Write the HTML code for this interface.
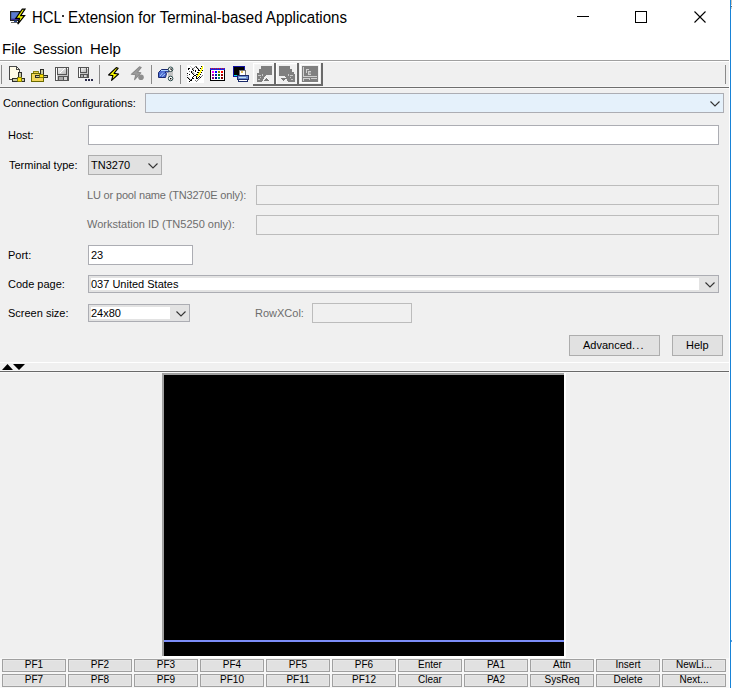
<!DOCTYPE html>
<html><head><meta charset="utf-8">
<style>
*{margin:0;padding:0;box-sizing:border-box}
html,body{width:732px;height:688px;overflow:hidden;background:#f0f0f0;font-family:"Liberation Sans",sans-serif;color:#000}
.a{position:absolute}
.t{position:absolute;white-space:nowrap;line-height:1;font-size:11px}
.gray{color:#6d6d6d}
.fld{position:absolute;background:#fff;border:1px solid #acadb3}
.dis{position:absolute;background:#f0f0f0;border:1px solid #bcbcbc}
.btn{position:absolute;background:#e1e1e1;border:1px solid #adadad}
.kb{position:absolute;background:#e1e1e1;border:1px solid #a0a0a0;box-shadow:inset 0 0 0 1px #e6e6e6;width:64px;height:13px;font-size:10px;line-height:10px;padding-top:0px;text-align:center;color:#000}
</style></head><body>
<!-- title + menu (white) -->
<div class="a" style="left:0;top:0;width:729px;height:60px;background:#fff"></div>
<div class="a" style="left:729px;top:0;width:1px;height:688px;background:#fff"></div>
<div class="a" style="left:730px;top:0;width:1px;height:688px;background:#1883d7"></div>
<div class="a" style="left:731px;top:0;width:1px;height:688px;background:#fff"></div>
<div class="a" style="left:731px;top:0;width:1px;height:5px;background:#d2c6b6"></div>
<div class="a" style="left:731px;top:6px;width:1px;height:1px;background:#6e6e6e"></div>
<div class="a" style="left:731px;top:7px;width:1px;height:2px;background:#ddd3c6"></div>
<div class="a" style="left:731px;top:640px;width:1px;height:2px;background:#5aa0e0"></div>

<!-- title icon -->
<svg class="a" style="left:8px;top:6px" width="20" height="20" viewBox="0 0 20 20">
  <rect x="2.6" y="5.6" width="9" height="8.8" fill="#5a7ad0" stroke="#222" stroke-width="1.2"/>
  <rect x="3.2" y="12.6" width="8" height="1.4" fill="#3a2a90"/>
  <rect x="6" y="14.6" width="3" height="1.6" fill="#2a4a8a"/>
  <rect x="3" y="16" width="7" height="0.9" fill="#555"/>
  <path d="M14.3 3.2 L17 3.2 L12.6 9.7 L16.6 9.7 L9.8 18.2 L11.6 12.3 L7.8 12.3 Z" fill="#ffff00" stroke="#000" stroke-width="1.2" stroke-linejoin="miter"/>
</svg>
<div class="t" style="left:32px;top:10px;font-size:16px;transform:scaleX(0.93);transform-origin:0 0">HCL</div>
<div class="a" style="left:62px;top:15px;width:2px;height:2px;background:#333"></div>
<div class="t" style="left:68px;top:10px;font-size:16px;transform:scaleX(0.94);transform-origin:0 0">Extension for Terminal-based Applications</div>

<!-- window buttons -->
<div class="a" style="left:577px;top:16px;width:12px;height:1px;background:#000"></div>
<div class="a" style="left:635px;top:11px;width:12px;height:12px;border:1px solid #000"></div>
<svg class="a" style="left:694px;top:11px" width="12" height="12" viewBox="0 0 12 12"><path d="M0.5 0.5 L11.5 11.5 M11.5 0.5 L0.5 11.5" stroke="#000" stroke-width="1.1"/></svg>

<!-- menu -->
<div class="t" style="left:2px;top:41px;font-size:15px">File</div>
<div class="t" style="left:33px;top:41px;font-size:15px;transform:scaleX(0.93);transform-origin:0 0">Session</div>
<div class="t" style="left:90px;top:41px;font-size:15px">Help</div>

<!-- toolbar -->
<div class="a" style="left:0;top:60px;width:729px;height:1px;background:#a0a0a0"></div>
<div class="a" style="left:0;top:61px;width:729px;height:1px;background:#fff"></div>
<div class="a" style="left:0;top:87px;width:729px;height:1px;background:#6e6e6e"></div>
<div class="a" style="left:0;top:88px;width:729px;height:1px;background:#f8f8f8"></div>
<div class="a" style="left:0;top:86px;width:729px;height:1px;background:#f6f6f6"></div>
<div class="a" style="left:1px;top:65px;width:1px;height:19px;background:#8a8a8a"></div>
<div class="a" style="left:725px;top:65px;width:1px;height:19px;background:#8a8a8a"></div>
<svg class="a" style="left:0;top:0" width="340" height="92" viewBox="0 0 340 92" shape-rendering="crispEdges">
 <!-- separators -->
 <rect x="99" y="65" width="1" height="19" fill="#8a8a8a"/>
 <rect x="151" y="65" width="1" height="19" fill="#8a8a8a"/>
 <rect x="180" y="65" width="1" height="19" fill="#8a8a8a"/>
 <!-- new doc -->
 <path d="M9.5 66.5 H16.5 L19.5 69.5 V79.5 H9.5 Z" fill="#fffbe6" stroke="#4a4a4a"/>
 <path d="M16.5 66.5 V69.5 H19.5" fill="none" stroke="#4a4a4a"/>
 <rect x="18" y="72" width="3" height="6" fill="#c8c8a0" stroke="#1a1a1a" stroke-width="0.9"/>
 <rect x="12" y="78" width="12" height="3" fill="#c8c8a0" stroke="#1a1a1a" stroke-width="0.9"/>
 <rect x="17.5" y="77" width="4" height="4.5" fill="#ffe000" stroke="#6b6b00" stroke-width="0.8"/>
 <!-- open folder -->
 <rect x="33" y="71" width="5" height="2" fill="#f0d050" stroke="#6b6b00" stroke-width="0.8"/>
 <rect x="31.5" y="73" width="12" height="8.5" fill="#f3d65a" stroke="#6b6b00"/>
 <rect x="40" y="69" width="3" height="5" fill="#c8c8a0" stroke="#1a1a1a" stroke-width="0.9"/>
 <rect x="35" y="75" width="12" height="2.5" fill="#c8c8a0" stroke="#1a1a1a" stroke-width="0.9"/>
 <rect x="39.8" y="74" width="3.6" height="3.6" fill="#ffe000" stroke="#6b6b00" stroke-width="0.8"/>
 <!-- save -->
 <defs><linearGradient id="lg" x1="0" y1="0" x2="1" y2="1"><stop offset="0" stop-color="#fafafa"/><stop offset="1" stop-color="#b8b8b8"/></linearGradient></defs>
 <rect x="55.5" y="67.5" width="13" height="13" fill="#c4c4c4" stroke="#555"/>
 <rect x="56" y="68" width="1.4" height="12" fill="#fff"/>
 <rect x="57.5" y="67.5" width="9" height="6.5" fill="url(#lg)" stroke="#555"/>
 <path d="M60 73 L65 68" stroke="#fff" stroke-width="1" shape-rendering="geometricPrecision"/>
 <rect x="67" y="68" width="1" height="1" fill="#fff"/>
 <rect x="58.5" y="76.5" width="9" height="4" fill="#a8a8a8" stroke="#555"/>
 <rect x="64" y="77" width="3" height="3" fill="#d4d4d4"/>
 <rect x="63" y="77" width="1" height="3" fill="#555"/>
 <!-- save as -->
 <rect x="78.5" y="67.5" width="10" height="10" fill="#c4c4c4" stroke="#555"/>
 <rect x="79" y="68" width="1.2" height="9" fill="#fff"/>
 <rect x="80.5" y="67.5" width="6" height="4.5" fill="url(#lg)" stroke="#555"/>
 <rect x="87" y="68" width="1" height="1" fill="#fff"/>
 <rect x="80.5" y="74.5" width="6.5" height="3" fill="#a8a8a8" stroke="#555"/>
 <rect x="84" y="75" width="2" height="2" fill="#d4d4d4"/>
 <rect x="83" y="75" width="1" height="2" fill="#555"/>
 <rect x="85" y="79" width="2" height="2" fill="#2a2a4a"/>
 <rect x="88" y="79" width="2" height="2" fill="#2a2a4a"/>
 <rect x="91" y="79" width="2" height="2" fill="#2a2a4a"/>
 <!-- bolt -->
 <path d="M116.3 67.6 L118.2 68.2 L114 73.4 L118.6 74 L111.6 80.4 L112.9 75.6 L108.6 75 Z" fill="#ffff00" stroke="#000" stroke-width="1.15" stroke-linejoin="round" shape-rendering="geometricPrecision"/>
 <!-- gray bolt -->
 <path d="M139.5 66.8 L141.2 67.4 L137.3 72.3 L140.8 72.8 L134.6 79.6 L135.8 74.8 L131.3 74.3 Z" fill="#9c9c9c" stroke="#8a8a8a" stroke-width="1.1" stroke-linejoin="round" shape-rendering="geometricPrecision"/>
 <circle cx="141" cy="77.3" r="2.8" fill="#8e8e8e" shape-rendering="geometricPrecision"/>
 <!-- hand -->
 <rect x="168" y="70" width="5" height="8" fill="#c4c4c4"/>
 <path d="M158.5 72.5 L161.5 69.5 H168.5 L170 71 L168 72 H165 L166.5 73.5 L165.5 77.5 H158.5 Z" fill="#4a6ad0" stroke="#1a2a70" stroke-width="1" shape-rendering="geometricPrecision"/>
 <rect x="161" y="70" width="8" height="1" fill="#b0d4ff"/>
 <path d="M160 76 L163 72.5 M162 76.5 L165 74" stroke="#a8ccf8" stroke-width="1" shape-rendering="geometricPrecision"/>
 <circle cx="170.6" cy="69.3" r="2.3" fill="#fff" stroke="#2a4a4a" stroke-width="1" shape-rendering="geometricPrecision"/>
 <path d="M169.5 68.5 L171.8 68.5 L171.8 70.8 Z" fill="#111" shape-rendering="geometricPrecision"/>
 <circle cx="170.6" cy="78.5" r="2.3" fill="#fff" stroke="#2a4a4a" stroke-width="1" shape-rendering="geometricPrecision"/>
 <rect x="170" y="78" width="1.4" height="1.4" fill="#000" shape-rendering="geometricPrecision"/>
 <!-- pencil / paper -->
 <rect x="187" y="65" width="17" height="18" fill="#fff"/>
 <rect x="190" y="66" width="1" height="1" fill="#c0c0c0"/>
 <rect x="195" y="66" width="1" height="1" fill="#7a7a7a"/>
 <rect x="196" y="66" width="1" height="1" fill="#7a7a7a"/>
 <rect x="201" y="66" width="1" height="1" fill="#000"/>
 <rect x="202" y="66" width="1" height="1" fill="#ffff00"/>
 <rect x="191" y="67" width="1" height="1" fill="#c0c0c0"/>
 <rect x="194" y="67" width="1" height="1" fill="#7a7a7a"/>
 <rect x="196" y="67" width="1" height="1" fill="#000"/>
 <rect x="197" y="67" width="1" height="1" fill="#c0c0c0"/>
 <rect x="202" y="67" width="1" height="1" fill="#ffff00"/>
 <rect x="188" y="68" width="1" height="1" fill="#000"/>
 <rect x="189" y="68" width="1" height="1" fill="#000"/>
 <rect x="192" y="68" width="1" height="1" fill="#7a7a7a"/>
 <rect x="193" y="68" width="1" height="1" fill="#7a7a7a"/>
 <rect x="197" y="68" width="1" height="1" fill="#000"/>
 <rect x="198" y="68" width="1" height="1" fill="#c0c0c0"/>
 <rect x="200" y="68" width="1" height="1" fill="#000"/>
 <rect x="201" y="68" width="1" height="1" fill="#ffff00"/>
 <rect x="202" y="68" width="1" height="1" fill="#ffff00"/>
 <rect x="188" y="69" width="1" height="1" fill="#000"/>
 <rect x="192" y="69" width="1" height="1" fill="#000"/>
 <rect x="193" y="69" width="1" height="1" fill="#c0c0c0"/>
 <rect x="198" y="69" width="1" height="1" fill="#000"/>
 <rect x="201" y="69" width="1" height="1" fill="#ffff00"/>
 <rect x="193" y="70" width="1" height="1" fill="#000"/>
 <rect x="195" y="70" width="1" height="1" fill="#000"/>
 <rect x="198" y="70" width="1" height="1" fill="#000"/>
 <rect x="199" y="70" width="1" height="1" fill="#000"/>
 <rect x="200" y="70" width="1" height="1" fill="#ffff00"/>
 <rect x="201" y="70" width="1" height="1" fill="#ffff00"/>
 <rect x="202" y="70" width="1" height="1" fill="#000"/>
 <rect x="189" y="71" width="1" height="1" fill="#7a7a7a"/>
 <rect x="191" y="71" width="1" height="1" fill="#000"/>
 <rect x="192" y="71" width="1" height="1" fill="#c0c0c0"/>
 <rect x="195" y="71" width="1" height="1" fill="#000"/>
 <rect x="200" y="71" width="1" height="1" fill="#ffff00"/>
 <rect x="191" y="72" width="1" height="1" fill="#000"/>
 <rect x="192" y="72" width="1" height="1" fill="#c0c0c0"/>
 <rect x="193" y="72" width="1" height="1" fill="#c0c0c0"/>
 <rect x="197" y="72" width="1" height="1" fill="#000"/>
 <rect x="198" y="72" width="1" height="1" fill="#000"/>
 <rect x="199" y="72" width="1" height="1" fill="#ffff00"/>
 <rect x="200" y="72" width="1" height="1" fill="#ffff00"/>
 <rect x="201" y="72" width="1" height="1" fill="#000"/>
 <rect x="187" y="73" width="1" height="1" fill="#000"/>
 <rect x="192" y="73" width="1" height="1" fill="#000"/>
 <rect x="193" y="73" width="1" height="1" fill="#c0c0c0"/>
 <rect x="194" y="73" width="1" height="1" fill="#c0c0c0"/>
 <rect x="198" y="73" width="1" height="1" fill="#ffff00"/>
 <rect x="199" y="73" width="1" height="1" fill="#ffff00"/>
 <rect x="189" y="74" width="1" height="1" fill="#000"/>
 <rect x="193" y="74" width="1" height="1" fill="#000"/>
 <rect x="196" y="74" width="1" height="1" fill="#000"/>
 <rect x="197" y="74" width="1" height="1" fill="#000"/>
 <rect x="198" y="74" width="1" height="1" fill="#ffff00"/>
 <rect x="199" y="74" width="1" height="1" fill="#ffff00"/>
 <rect x="200" y="74" width="1" height="1" fill="#000"/>
 <rect x="187" y="75" width="1" height="1" fill="#7a7a7a"/>
 <rect x="194" y="75" width="1" height="1" fill="#000"/>
 <rect x="195" y="75" width="1" height="1" fill="#000"/>
 <rect x="197" y="75" width="1" height="1" fill="#ffff00"/>
 <rect x="198" y="75" width="1" height="1" fill="#ffff00"/>
 <rect x="202" y="75" width="1" height="1" fill="#7a7a7a"/>
 <rect x="193" y="76" width="1" height="1" fill="#000"/>
 <rect x="196" y="76" width="1" height="1" fill="#000"/>
 <rect x="197" y="76" width="1" height="1" fill="#ffff00"/>
 <rect x="199" y="76" width="1" height="1" fill="#000"/>
 <rect x="201" y="76" width="1" height="1" fill="#7a7a7a"/>
 <rect x="187" y="77" width="1" height="1" fill="#000"/>
 <rect x="188" y="77" width="1" height="1" fill="#c0c0c0"/>
 <rect x="192" y="77" width="1" height="1" fill="#000"/>
 <rect x="196" y="77" width="1" height="1" fill="#000"/>
 <rect x="198" y="77" width="1" height="1" fill="#000"/>
 <rect x="200" y="77" width="1" height="1" fill="#000"/>
 <rect x="188" y="78" width="1" height="1" fill="#000"/>
 <rect x="189" y="78" width="1" height="1" fill="#c0c0c0"/>
 <rect x="192" y="78" width="1" height="1" fill="#000"/>
 <rect x="193" y="78" width="1" height="1" fill="#000"/>
 <rect x="196" y="78" width="1" height="1" fill="#000"/>
 <rect x="197" y="78" width="1" height="1" fill="#000"/>
 <rect x="199" y="78" width="1" height="1" fill="#7a7a7a"/>
 <rect x="189" y="79" width="1" height="1" fill="#000"/>
 <rect x="190" y="79" width="1" height="1" fill="#c0c0c0"/>
 <rect x="191" y="79" width="1" height="1" fill="#000"/>
 <rect x="198" y="79" width="1" height="1" fill="#7a7a7a"/>
 <rect x="190" y="80" width="1" height="1" fill="#000"/>
 <rect x="191" y="80" width="1" height="1" fill="#000"/>
 <rect x="195" y="80" width="1" height="1" fill="#7a7a7a"/>
 <rect x="197" y="80" width="1" height="1" fill="#7a7a7a"/>
 <rect x="189" y="81" width="1" height="1" fill="#000"/>
 <rect x="196" y="81" width="1" height="1" fill="#7a7a7a"/>
 <!-- calendar -->
 <rect x="210" y="68" width="15" height="13" fill="#000"/>
 <rect x="211" y="70" width="13" height="10" fill="#fff"/>
 <rect x="210" y="68" width="15" height="2" fill="#2020e0"/>
 <rect x="211" y="68" width="1" height="1" fill="#e02020"/><rect x="213" y="68" width="1" height="1" fill="#e02020"/><rect x="215" y="68" width="1" height="1" fill="#e02020"/><rect x="217" y="68" width="1" height="1" fill="#e02020"/><rect x="219" y="68" width="1" height="1" fill="#e02020"/><rect x="221" y="68" width="1" height="1" fill="#e02020"/><rect x="223" y="68" width="1" height="1" fill="#e02020"/>
 <rect x="212" y="71" width="2" height="2" fill="#ff00ff"/><rect x="215" y="71" width="2" height="2" fill="#0000ff"/><rect x="218" y="71" width="2" height="2" fill="#808000"/><rect x="221" y="71" width="2" height="2" fill="#ff0000"/>
 <rect x="212" y="74" width="2" height="2" fill="#a000a0"/><rect x="215" y="74" width="2" height="2" fill="#0020c0"/><rect x="218" y="74" width="2" height="2" fill="#008000"/><rect x="221" y="74" width="2" height="2" fill="#a00000"/>
 <rect x="212" y="77" width="2" height="2" fill="#800080"/><rect x="215" y="77" width="2" height="2" fill="#000080"/><rect x="218" y="77" width="2" height="2" fill="#008080"/><rect x="221" y="77" width="2" height="2" fill="#800000"/>
 <!-- printer -->
 <rect x="233" y="66" width="11" height="10" fill="#000" stroke="#1010a0" stroke-width="1"/>
 <rect x="234" y="75" width="4" height="1" fill="#00e0e0"/>
 <rect x="239" y="70" width="6" height="6" fill="#fff" stroke="#555" stroke-width="0.8"/>
 <rect x="240.5" y="71" width="2" height="2" fill="#e0c060"/>
 <rect x="237.5" y="75.5" width="11" height="4" fill="#6a8ad0" stroke="#1a2a6a" stroke-width="1"/>
 <rect x="238.5" y="76.5" width="7" height="1.5" fill="#c0e0f0"/>
 <rect x="238.5" y="79.5" width="9" height="2" fill="#fff" stroke="#1a2a6a" stroke-width="1"/>
 <!-- raised disabled buttons -->
 <g>
  <rect x="253" y="63" width="23" height="23" fill="#6a6a6a"/>
  <rect x="253" y="63" width="21" height="21" fill="#fff"/>
  <rect x="254" y="64" width="20" height="20" fill="#f4f4f4"/>
  <rect x="255" y="65" width="18" height="18" fill="#f0f0f0"/>
  <path d="M261 66 H272 V75 H266 L262 81.5 H256.5 V73 H259 V69 H261 Z" fill="#808080"/>
  <path d="M264 81 L266.5 78 L269 81 Z" fill="#7a7a7a"/>
  <path d="M266.5 77 L270 81" stroke="#fff" stroke-width="0.8"/>
  <rect x="258" y="75" width="3" height="1" fill="#c8c8c8"/><rect x="262" y="74" width="1" height="2" fill="#c8c8c8"/><rect x="260" y="77" width="1" height="1" fill="#c8c8c8"/><rect x="258" y="79" width="2" height="1" fill="#c8c8c8"/>
 </g>
 <g>
  <rect x="276" y="63" width="23" height="23" fill="#6a6a6a"/>
  <rect x="276" y="63" width="21" height="21" fill="#fff"/>
  <rect x="277" y="64" width="20" height="20" fill="#f4f4f4"/>
  <rect x="278" y="65" width="18" height="18" fill="#f0f0f0"/>
  <path d="M279 66 H289.5 V69 H291.5 V72 H293.5 V73.5 H295 V81.5 H288 L284.5 75.5 H279 Z" fill="#808080"/>
  <path d="M281 78 L286 78 L283.5 81 Z" fill="#7a7a7a"/>
  <rect x="288" y="74" width="1" height="2" fill="#c8c8c8"/><rect x="290" y="75" width="3" height="1" fill="#c8c8c8"/><rect x="290" y="77" width="1" height="1" fill="#c8c8c8"/><rect x="291" y="79" width="2" height="1" fill="#c8c8c8"/>
 </g>
 <g>
  <rect x="299" y="63" width="24" height="23" fill="#6a6a6a"/>
  <rect x="299" y="63" width="22" height="21" fill="#f0f0f0"/>
  <rect x="300" y="64" width="20" height="19" fill="#fff"/>
  <rect x="301" y="65" width="18" height="17" fill="#f0f0f0"/>
  <rect x="302" y="66" width="16" height="16" fill="#808080"/>
  <path d="M303.5 67 V76.5 H317 M306.5 72.5 V69.5 H308.5 M303.5 81 V78.5 H309.5 V80 M311 78.5 H317" stroke="#d0d0d0" stroke-width="1" fill="none"/>
  <rect x="308" y="71" width="3" height="4" fill="#d0d0d0"/><rect x="309" y="72" width="2" height="2" fill="#a0a0a0"/>
 </g>
</svg>


<!-- form -->
<div class="t" style="left:3px;top:98px">Connection Configurations:</div>
<div class="a" style="left:145px;top:93px;width:579px;height:20px;background:#e5f1fb;border:1px solid #acadb3"></div>
<svg class="a" style="left:710px;top:101px" width="10" height="6" viewBox="0 0 10 6"><path d="M0.5 0.5 L5 5 L9.5 0.5" stroke="#333" stroke-width="1.1" fill="none"/></svg>

<div class="t" style="left:8px;top:130px">Host:</div>
<div class="fld" style="left:88px;top:125px;width:631px;height:20px"></div>

<div class="t" style="left:9px;top:160px">Terminal type:</div>
<div class="a" style="left:88px;top:155px;width:74px;height:20px;background:#e1e1e1;border:1px solid #adadad"></div>
<div class="t" style="left:91px;top:160px">TN3270</div>
<svg class="a" style="left:148px;top:163px" width="10" height="6" viewBox="0 0 10 6"><path d="M0.5 0.5 L5 5 L9.5 0.5" stroke="#333" stroke-width="1.1" fill="none"/></svg>

<div class="t gray" style="left:87px;top:190px;letter-spacing:-0.17px">LU or pool name (TN3270E only):</div>
<div class="dis" style="left:256px;top:185px;width:463px;height:20px"></div>
<div class="t gray" style="left:87px;top:219px">Workstation ID (TN5250 only):</div>
<div class="dis" style="left:256px;top:215px;width:463px;height:20px"></div>

<div class="t" style="left:8px;top:250px">Port:</div>
<div class="fld" style="left:88px;top:245px;width:105px;height:20px"></div>
<div class="t" style="left:91px;top:250px">23</div>

<div class="t" style="left:8px;top:279px">Code page:</div>
<div class="a" style="left:88px;top:275px;width:631px;height:18px;background:#e3e3e3;border:1px solid #acadb3"></div>
<div class="a" style="left:91px;top:278px;width:608px;height:12px;background:#fff"></div>
<div class="t" style="left:91px;top:279px">037 United States</div>
<svg class="a" style="left:705px;top:282px" width="10" height="6" viewBox="0 0 10 6"><path d="M0.5 0.5 L5 5 L9.5 0.5" stroke="#333" stroke-width="1.1" fill="none"/></svg>

<div class="t" style="left:8px;top:308px">Screen size:</div>
<div class="a" style="left:88px;top:304px;width:102px;height:18px;background:#e3e3e3;border:1px solid #acadb3"></div>
<div class="a" style="left:91px;top:307px;width:79px;height:12px;background:#fff"></div>
<div class="t" style="left:91px;top:308px">24x80</div>
<svg class="a" style="left:176px;top:311px" width="10" height="6" viewBox="0 0 10 6"><path d="M0.5 0.5 L5 5 L9.5 0.5" stroke="#333" stroke-width="1.1" fill="none"/></svg>

<div class="t gray" style="left:255px;top:308px">RowXCol:</div>
<div class="dis" style="left:312px;top:303px;width:100px;height:20px"></div>

<div class="btn" style="left:569px;top:335px;width:91px;height:21px"></div>
<div class="t" style="left:583px;top:340px">Advanced<span style="letter-spacing:1.2px">...</span></div>
<div class="btn" style="left:672px;top:335px;width:51px;height:21px"></div>
<div class="t" style="left:686px;top:340px">Help</div>

<!-- splitter -->
<div class="a" style="left:0;top:362px;width:729px;height:1px;background:#fff"></div>
<svg class="a" style="left:0;top:362px" width="30" height="10" viewBox="0 0 30 10"><path d="M2 8 L7.5 2 L13 8 Z M13 2 L25 2 L19 8 Z" fill="#000"/></svg>
<div class="a" style="left:0;top:370px;width:729px;height:1px;background:#f6f6f6"></div>
<div class="a" style="left:0;top:371px;width:729px;height:1px;background:#6a6a6a"></div>
<div class="a" style="left:0;top:372px;width:729px;height:1px;background:#f8f8f8"></div>

<!-- terminal -->
<div class="a" style="left:162px;top:373px;width:404px;height:285px;background:#fff"></div>
<div class="a" style="left:162px;top:373px;width:402px;height:2px;background:#a0a0a0"></div>
<div class="a" style="left:162px;top:373px;width:2px;height:283px;background:#a0a0a0"></div>
<div class="a" style="left:164px;top:375px;width:400px;height:281px;background:#000"></div>
<div class="a" style="left:164px;top:640px;width:400px;height:2px;background:#7b8cf7"></div>

<!-- keypad -->
<div class="a" style="left:0;top:658px;width:729px;height:30px;background:#f7f7f7"></div>
<div class="kb" style="left:2px;top:659px">PF1</div>
<div class="kb" style="left:68px;top:659px">PF2</div>
<div class="kb" style="left:134px;top:659px">PF3</div>
<div class="kb" style="left:200px;top:659px">PF4</div>
<div class="kb" style="left:266px;top:659px">PF5</div>
<div class="kb" style="left:332px;top:659px">PF6</div>
<div class="kb" style="left:398px;top:659px">Enter</div>
<div class="kb" style="left:464px;top:659px">PA1</div>
<div class="kb" style="left:530px;top:659px">Attn</div>
<div class="kb" style="left:596px;top:659px">Insert</div>
<div class="kb" style="left:662px;top:659px">NewLi...</div>
<div class="kb" style="left:2px;top:674px">PF7</div>
<div class="kb" style="left:68px;top:674px">PF8</div>
<div class="kb" style="left:134px;top:674px">PF9</div>
<div class="kb" style="left:200px;top:674px">PF10</div>
<div class="kb" style="left:266px;top:674px">PF11</div>
<div class="kb" style="left:332px;top:674px">PF12</div>
<div class="kb" style="left:398px;top:674px">Clear</div>
<div class="kb" style="left:464px;top:674px">PA2</div>
<div class="kb" style="left:530px;top:674px">SysReq</div>
<div class="kb" style="left:596px;top:674px">Delete</div>
<div class="kb" style="left:662px;top:674px">Next...</div>
</body></html>
